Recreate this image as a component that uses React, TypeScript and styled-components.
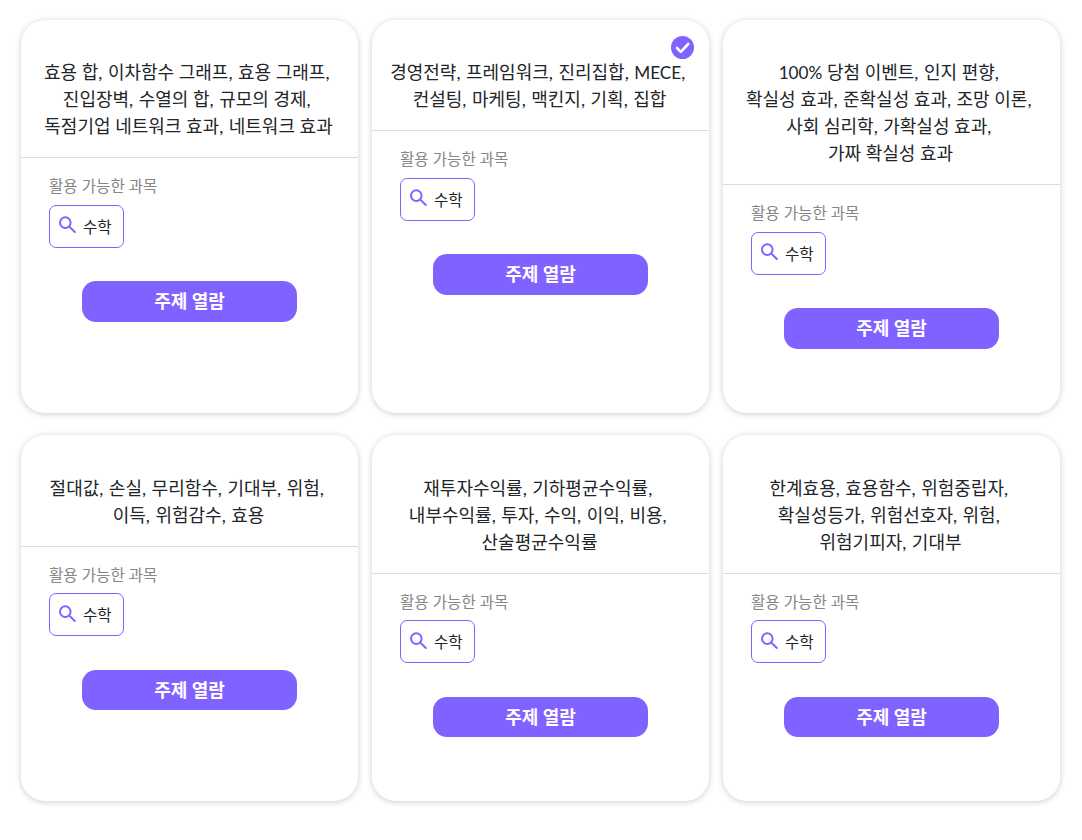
import React from "react";
import styled, { createGlobalStyle } from "styled-components";

const Global = createGlobalStyle`
  html, body { margin: 0; padding: 0; background: #fff; }
  body { font-family: Lato, "Noto Sans CJK KR", sans-serif; }
`;

const Grid = styled.main`
  display: grid;
  grid-template-columns: repeat(3, 337px);
  column-gap: 14px;
  row-gap: 22.6px;
  padding: 20px 22px 38px 21px;
`;

const Card = styled.article`
  position: relative;
  display: flex;
  flex-direction: column;
  background: #fff;
  border-radius: 24px;
  box-shadow: 0 1px 6px rgba(0, 0, 0, 0.2);
  padding-bottom: 64.1px;
`;

const Keywords = styled.div`
  padding: 39.4px 10px 17px;
  font-size: 18px;
  line-height: 27px;
  text-align: center;
  color: #212529;
  border-bottom: 1px solid #dcdcdc;
`;

const Line = styled.div`
  height: 27px;
`;

const Keyword = styled.span<{ $last?: boolean }>`
  display: inline-block;
  white-space: pre;
  margin-right: ${(p) => (p.$last ? "2px" : "0.9px")};
`;

const Latin = styled.span`
  font-size: 17.2px;
`;

const Body = styled.div`
  display: flex;
  flex-direction: column;
  align-items: flex-start;
  padding: 17px 28px 0;
`;

const Label = styled.div`
  font-size: 15.6px;
  line-height: 23.4px;
  color: #868686;
`;

const Chip = styled.div`
  display: flex;
  align-items: center;
  gap: 5px;
  box-sizing: border-box;
  width: 75px;
  height: 43px;
  margin-top: 6px;
  padding: 0 0 1px 9px;
  border: 1px solid #7f62ff;
  border-radius: 7px;
  font-size: 15.6px;
  color: #212529;
`;

const OpenButton = styled.button`
  align-self: center;
  width: 215px;
  height: 40.5px;
  margin-top: 33.4px;
  padding: 0 0 2px;
  border: none;
  border-radius: 14px;
  background: #7f62ff;
  color: #fff;
  font-family: inherit;
  font-size: 18px;
  font-weight: 700;
`;

const Check = styled.svg`
  position: absolute;
  top: 16px;
  right: 15px;
  width: 23px;
  height: 23px;
`;

const cards: { lines: string[][]; checked?: boolean }[] = [
  { lines: [["효용 합", "이차함수 그래프", "효용 그래프"], ["진입장벽", "수열의 합", "규모의 경제"], ["독점기업 네트워크 효과", "네트워크 효과"]] },
  { lines: [["경영전략", "프레임워크", "진리집합", "MECE"], ["컨설팅", "마케팅", "맥킨지", "기획", "집합"]], checked: true },
  { lines: [["100% 당첨 이벤트", "인지 편향"], ["확실성 효과", "준확실성 효과", "조망 이론"], ["사회 심리학", "가확실성 효과"], ["가짜 확실성 효과"]] },
  { lines: [["절대값", "손실", "무리함수", "기대부", "위험"], ["이득", "위험감수", "효용"]] },
  { lines: [["재투자수익률", "기하평균수익률"], ["내부수익률", "투자", "수익", "이익", "비용"], ["산술평균수익률"]] },
  { lines: [["한계효용", "효용함수", "위험중립자"], ["확실성등가", "위험선호자", "위험"], ["위험기피자", "기대부"]] },
];

const withLatin = (word: string) =>
  word.split(/(MECE|100%)/).map((part, i) =>
    part === "MECE" || part === "100%" ? <Latin key={i}>{part}</Latin> : part
  );

const SearchIcon = () => (
  <svg width="19" height="19" viewBox="0 0 19 19" fill="none" stroke="#7f62ff" strokeWidth="2" strokeLinecap="round">
    <circle cx="6.3" cy="6.6" r="5.3" />
    <path d="M10.3 10.6 15.8 16" />
  </svg>
);

export default function App() {
  return (
    <>
      <Global />
      <Grid>
        {cards.map((card, i) => (
          <Card key={i}>
            {card.checked && (
              <Check viewBox="0 0 23 23">
                <circle cx="11.5" cy="11.5" r="11.5" fill="#7f62ff" />
                <path d="M6 12l3.8 3.8L17.2 8" fill="none" stroke="#fff" strokeWidth="2.6" strokeLinecap="round" strokeLinejoin="round" />
              </Check>
            )}
            <Keywords>
              {card.lines.map((line, j) => (
                <Line key={j}>
                  {line.map((word, k) => {
                    const isLast = j === card.lines.length - 1 && k === line.length - 1;
                    return (
                      <Keyword key={k} $last={isLast}>
                        {withLatin(word)}
                        {isLast ? "" : ", "}
                      </Keyword>
                    );
                  })}
                </Line>
              ))}
            </Keywords>
            <Body>
              <Label>활용 가능한 과목</Label>
              <Chip>
                <SearchIcon />
                수학
              </Chip>
            </Body>
            <OpenButton>주제 열람</OpenButton>
          </Card>
        ))}
      </Grid>
    </>
  );
}
